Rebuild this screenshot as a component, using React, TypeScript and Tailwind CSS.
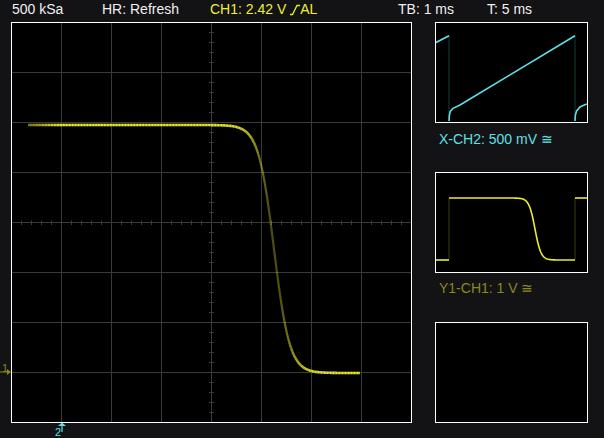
import React from 'react';

const YELLOW = '#ecec2e';
const CYAN = '#5fe0e6';
const OLIVE = '#8a881f';
const GRID = '#3a3a3a';

const sig = (t: number) => 1 / (1 + Math.exp(-t));
const edge = (x: number) => 125 + 248 * sig((x - 274) / 7.8);

// falling edge on the main screen, sampled by arc length so the steep
// part stays dim like a sparse sample cloud
function MainTrace() {
  const segs: React.ReactNode[] = [];
  let px = 28;
  let py = edge(28);
  let x = 28;
  let n = 0;
  while (x < 360) {
    let cx = x;
    let cy = py;
    // walk forward until the segment is ~1.5px long
    while (cx < 360 && Math.hypot(cx - px, cy - py) < 1.5) {
      cx += 0.02;
      cy = edge(cx);
    }
    const slope = Math.abs((cy - py) / (cx - px));
    let a = Math.max(0.34, 1 / (1 + 0.25 * slope));
    if (cx < 60) a *= 0.5 + 0.5 * ((cx - 28) / 32);
    const w = 2.6 - Math.min(0.4, slope * 0.1);
    segs.push(
      <line
        key={n++}
        x1={px}
        y1={py}
        x2={cx}
        y2={cy}
        stroke={YELLOW}
        strokeOpacity={a}
        strokeWidth={w}
      />
    );
    px = cx;
    py = cy;
    x = cx;
  }
  return <g>{segs}</g>;
}

function Graticule() {
  const lines: React.ReactNode[] = [];
  for (let i = 1; i < 8; i++) {
    const v = 11 + i * 50;
    const h = 22 + i * 50;
    lines.push(<line key={'v' + i} x1={v} y1={22} x2={v} y2={422} stroke={GRID} strokeWidth={1} />);
    lines.push(<line key={'h' + i} x1={11} y1={h} x2={411} y2={h} stroke={GRID} strokeWidth={1} />);
  }
  for (let k = 1; k < 40; k++) {
    if (k % 5 === 0) continue;
    const tx = 11 + k * 10;
    const ty = 22 + k * 10;
    lines.push(<line key={'tx' + k} x1={tx} y1={220} x2={tx} y2={224.5} stroke={GRID} strokeWidth={1} />);
    lines.push(<line key={'ty' + k} x1={208.5} y1={ty} x2={213.5} y2={ty} stroke={GRID} strokeWidth={1} />);
  }
  return <g transform="translate(0.5 0.5)">{lines}</g>;
}

function SlopeIcon() {
  return (
    <svg width="10" height="12" viewBox="0 0 10 12" className="inline-block ml-[4px] mt-[4px]">
      <path d="M0 10.5 H2.5 L7 1.5 H10" fill="none" stroke={YELLOW} strokeWidth="1.3" />
    </svg>
  );
}

function XPanel() {
  const rise = (x0: number, pts: [number, number][]) =>
    pts.map(([dx, y]) => `${x0 + dx},${y}`).join(' ');
  return (
    <svg viewBox="436 23 151 99" className="w-full h-full">
      <line x1={449} y1={36} x2={449} y2={121} stroke="#123a3a" strokeWidth={1} />
      <line x1={575} y1={36} x2={575} y2={121} stroke="#123a3a" strokeWidth={1} />
      <polyline points="435,43 449,35.7" fill="none" stroke={CYAN} strokeWidth={1.6} />
      <polyline
        points={rise(449, [[0, 121], [0.4, 115], [1.3, 111.5], [4, 108.3], [11, 105]]) + ' 575,35.7'}
        fill="none"
        stroke={CYAN}
        strokeWidth={1.6}
      />
      <polyline
        points={rise(575, [[0, 121], [0.4, 115], [1.6, 111], [5, 107], [8, 105.5], [12, 104]])}
        fill="none"
        stroke={CYAN}
        strokeWidth={1.6}
      />
    </svg>
  );
}

function YPanel() {
  const pts: string[] = [];
  for (let x = 449; x <= 575; x += 0.5) {
    const y = 198 + 62 * sig((x - 535) / 3);
    pts.push(`${x},${y}`);
  }
  return (
    <svg viewBox="436 173 151 99" className="w-full h-full">
      <line x1={449} y1={198} x2={449} y2={260} stroke="#3a3a10" strokeWidth={1} />
      <line x1={575} y1={198} x2={575} y2={260} stroke="#3a3a10" strokeWidth={1} />
      <polyline points="435,260 449,260" fill="none" stroke={YELLOW} strokeWidth={1.6} />
      <polyline points={pts.join(' ')} fill="none" stroke={YELLOW} strokeWidth={1.6} />
      <polyline points="575,198 588,198" fill="none" stroke={YELLOW} strokeWidth={1.6} />
    </svg>
  );
}

export default function App() {
  return (
    <div
      className="w-[604px] h-[438px] overflow-hidden bg-[#131215] text-[14px] text-[#efefef]"
      style={{ fontFamily: '"Liberation Sans", Arial, sans-serif' }}
    >
      {/* status bar */}
      <div className="flex h-[22px] leading-[18px] whitespace-nowrap">
        <div className="w-[102px] pl-[12px]">500 kSa</div>
        <div className="w-[108px]">HR: Refresh</div>
        <div className="w-[188px] flex items-start text-[#f0f032]">
          CH1: 2.42 V<SlopeIcon />AL
        </div>
        <div className="w-[89px]">TB: 1 ms</div>
        <div>T: 5 ms</div>
      </div>

      <div className="flex">
        {/* main screen */}
        <div className="relative pl-[11px]">
          <div className="w-[401px] h-[401px] border border-white bg-black">
            <svg viewBox="12 23 399 399" className="w-full h-full">
              <Graticule />
              <MainTrace />
            </svg>
          </div>

          {/* CH1 ground marker */}
          <div className="absolute left-0 top-[340px] w-[12px] h-[14px]">
            <span className="absolute left-[2px] top-[1px] text-[11px] leading-[11px] text-[#8a881f]">1</span>
            <svg width="12" height="6" viewBox="0 0 12 6" className="absolute left-0 top-[7px]">
              <line x1="0" y1="3" x2="7" y2="3" stroke={OLIVE} strokeWidth="1" />
              <path d="M7 0 L11 3 L7 6 Z" fill={OLIVE} />
            </svg>
          </div>

          {/* CH2 trigger marker */}
          <div className="absolute left-[54px] top-[400px] w-[14px] h-[16px]">
            <svg width="10" height="10" viewBox="0 0 10 10" className="absolute left-[3px] top-0">
              <path d="M1 4 L5 0.5 L9 4 Z" fill={CYAN} />
              <line x1="5" y1="3" x2="5" y2="10" stroke={CYAN} strokeWidth="1.2" />
            </svg>
            <span className="absolute left-[1px] top-[5px] text-[11px] leading-[11px] text-[#5fe0e6]">2</span>
          </div>
        </div>

        {/* side views */}
        <div className="ml-[23px] w-[153px] flex flex-col">
          <div className="h-[101px] border border-white bg-black">
            <XPanel />
          </div>
          <div className="h-[49px] pt-[8px] pl-[4px] leading-[16px] text-[#5fe0e6] whitespace-nowrap">
            X-CH2: 500 mV ≅
          </div>
          <div className="h-[101px] border border-white bg-black">
            <YPanel />
          </div>
          <div className="h-[49px] pt-[7px] pl-[4px] leading-[16px] text-[#8a881f] whitespace-nowrap">
            Y1-CH1: 1 V ≅
          </div>
          <div className="h-[101px] border border-white bg-black" />
        </div>
      </div>
    </div>
  );
}
